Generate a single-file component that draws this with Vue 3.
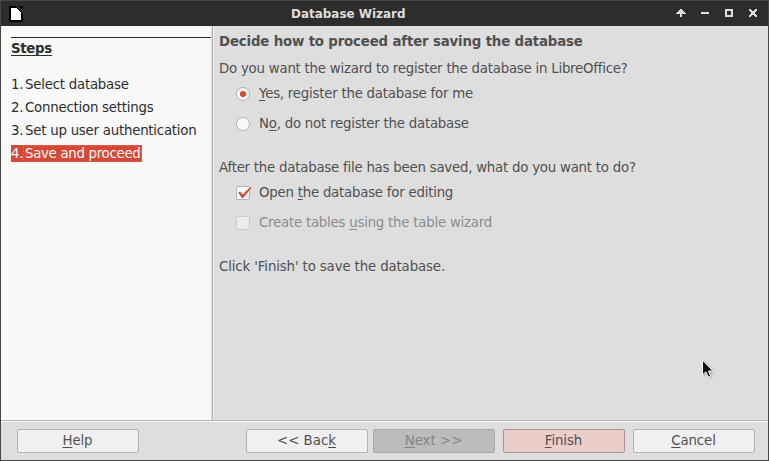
<script setup>
const steps = ['Select database', 'Connection settings', 'Set up user authentication', 'Save and proceed']
const current = 3
</script>

<template>
  <div class="window">
    <header class="titlebar">
      <svg class="app-icon" width="14" height="16" viewBox="0 0 14 16" shape-rendering="crispEdges">
        <path d="M0 0H14V16H0Z" fill="#000" />
        <path d="M2 2H7L12 7V14H2Z" fill="#fff" />
        <path d="M8 0H9L14 5V7H13L7 1V0Z" fill="#2d2d2d" />
        <path d="M10 0H14V4Z" fill="#000" />
      </svg>
      <h1>Database Wizard</h1>
      <div class="controls">
        <svg width="10" height="9" viewBox="0 0 10 9" shape-rendering="crispEdges"><path d="M4 0H6V1H7V2H8V3H9V4H10V5H6V8H4V5H0V4H1V3H2V2H3V1H4Z" /></svg>
        <svg width="8" height="9" viewBox="0 0 8 9"><path d="M0 3H8V5H0Z" /></svg>
        <svg width="8" height="9" viewBox="0 0 8 9"><path fill-rule="evenodd" d="M0 0H8V8H0ZM2 2V6H6V2Z" /></svg>
        <svg width="8" height="9" viewBox="0 0 8 9" shape-rendering="crispEdges"><path d="M0 0H2V1H3V2H5V1H6V0H8V2H7V3H6V5H7V6H8V8H6V7H5V6H3V7H2V8H0V6H1V5H2V3H1V2H0Z" /></svg>
      </div>
    </header>

    <main class="body">
      <aside class="sidebar">
        <h2>Steps</h2>
        <ol>
          <li v-for="(step, i) in steps" :key="step" :class="{ current: i === current }">
            <span class="num">{{ i + 1 }}.</span><span class="name">{{ step }}</span>
          </li>
        </ol>
      </aside>
      <section class="page">
        <h3>Decide how to proceed after saving the database</h3>
        <p class="question">Do you want the wizard to register the database in LibreOffice?</p>
        <label class="option"><i class="radio on"></i><span><u>Y</u>es, register the database for me</span></label>
        <label class="option"><i class="radio"></i><span>N<u>o</u>, do not register the database</span></label>
        <p class="question second">After the database file has been saved, what do you want to do?</p>
        <label class="option">
          <i class="check"><svg width="16" height="14" viewBox="0 0 16 14"><path d="M1.2 5.4L3 4.4L5.6 7.4L13.4 0L14.6 .6L6.2 11H4.8Z" /></svg></i>
          <span>Open <u>t</u>he database for editing</span>
        </label>
        <label class="option disabled"><i class="check"></i><span>Create tables <u>u</u>sing the table wizard</span></label>
        <p class="note">Click 'Finish' to save the database.</p>
      </section>
    </main>

    <footer class="actions">
      <button class="help"><span><u>H</u>elp</span></button>
      <button class="back"><span>&lt;&lt; Bac<u>k</u></span></button>
      <button class="next"><span><u>N</u>ext &gt;&gt;</span></button>
      <button class="finish"><span><u>F</u>inish</span></button>
      <button class="cancel"><span><u>C</u>ancel</span></button>
    </footer>

    <svg class="pointer" width="14" height="21" viewBox="0 0 14 21">
      <path d="M1.5 1V16L4.8 12.9L7.4 18L9.6 16.9L7.4 12.1H12Z" fill="#111" stroke="#fff" stroke-width="1" />
    </svg>
  </div>
</template>

<style>
body {
  margin: 0;
  overflow: hidden;
}
</style>

<style scoped>
.window {
  position: relative;
  box-sizing: border-box;
  width: 769px;
  height: 461px;
  border: 1px solid #464646;
  display: flex;
  flex-direction: column;
  background: #dedede;
  color: #505050;
  font: 13.333px/20px "DejaVu Sans", sans-serif;
  letter-spacing: -0.23px;
  white-space: nowrap;
}
h1, h2, h3, p, ol { margin: 0; padding: 0; font-size: inherit; }
u {
  text-decoration-thickness: 1px;
  text-underline-offset: 2px;
  text-decoration-skip-ink: none;
}
.titlebar {
  display: flex;
  align-items: center;
  height: 25px;
  flex: none;
  padding: 0 11px 0 8px;
  background: #2d2d2d;
  color: #dedede;
}
.titlebar h1 {
  flex: 1;
  padding-left: 268px;
  font-size: 12px;
  font-weight: bold;
  letter-spacing: -0.03px;
}
.controls { display: flex; gap: 16px; fill: #dedede; }
.controls svg:first-child { margin-right: -1px; }
.body { display: flex; flex: 1; }
.sidebar {
  box-sizing: border-box;
  width: 211px;
  padding: 11px 1px 0 10px;
  background: linear-gradient(#dedede, #dedede) right / 1px 100% no-repeat #f9f9f9;
  color: #2d2d2d;
}
.sidebar h2 {
  border-top: 1px solid #2d2d2d;
  font-weight: bold;
  letter-spacing: -0.3px;
  text-decoration: underline 1px;
  text-underline-offset: 2px;
  text-decoration-skip-ink: none;
  line-height: 22px;
}
.sidebar ol { list-style: none; padding-top: 16px; }
.sidebar li { display: flex; height: 17px; line-height: 17px; margin-bottom: 6px; }
.num { width: 12px; padding-right: 2px; }
.name { flex: none; }
.sidebar .current { width: 131px; background: #d64937; color: #f9f9f9; letter-spacing: -0.3px; }
.sidebar .current .name {
  box-sizing: border-box;
  width: 119px;
  height: 17px;
  margin-left: -2px;
  padding-left: 2px;
  background-image:
    linear-gradient(90deg, #29b6c8 50%, transparent 50%),
    linear-gradient(90deg, #29b6c8 50%, transparent 50%),
    linear-gradient(#29b6c8 50%, transparent 50%),
    linear-gradient(#29b6c8 50%, transparent 50%);
  background-size: 2px 1px, 2px 1px, 1px 2px, 1px 2px;
  background-position: left top, left bottom, left top, right top;
  background-repeat: repeat-x, repeat-x, repeat-y, repeat-y;
}
.page {
  flex: 1;
  border-left: 1px solid #b2b2b2;
  box-shadow: inset 1px 0 #efefef;
  padding: 6px 0 0 6px;
}
.page h3 { font-weight: bold; letter-spacing: -0.16px; }
.question { margin-top: 7px; }
.question.second { margin-top: 19px; }
.option { display: flex; align-items: center; height: 30px; padding-left: 17px; gap: 9px; }
.disabled { color: #8c8c8c; }
.note { margin-top: 19px; letter-spacing: -0.13px; }
.radio, .check {
  box-sizing: border-box;
  width: 14px;
  height: 14px;
  border: 1px solid #b2b2b2;
  background: #f9f9f9;
}
.radio { border-radius: 50%; }
.radio.on { background: radial-gradient(circle, #d64937 2.7px, #f9f9f9 3.5px); }
.check { border-radius: 2px; }
.check svg { display: block; fill: #d64937; }
.disabled .check { background: #ececec; border-color: #cbcbcb; }
.actions {
  display: flex;
  box-sizing: border-box;
  height: 40px;
  flex: none;
  border-top: 1px solid #b2b2b2;
  box-shadow: inset 0 1px #f9f9f9;
  padding: 8px 0 0 16px;
}
button {
  box-sizing: border-box;
  width: 122px;
  height: 24px;
  margin: 0;
  padding: 0 1px 0 0;
  border: 1px solid #b2b2b2;
  border-radius: 2px;
  background: #f0f0f0;
  color: #505050;
  font: inherit;
  letter-spacing: -0.1px;
}
.back { margin-left: 107px; letter-spacing: 0; }
.next { margin-left: 5px; background: #bcbcbc; border-color: #a8a8a8; color: #858585; letter-spacing: 0; }
.finish { margin-left: 8px; background: #ebcdca; border-color: #aa9593; }
.cancel { margin-left: 8px; }
.pointer { position: absolute; left: 700px; top: 358px; filter: drop-shadow(1px 1px 1px #0004); }
</style>
